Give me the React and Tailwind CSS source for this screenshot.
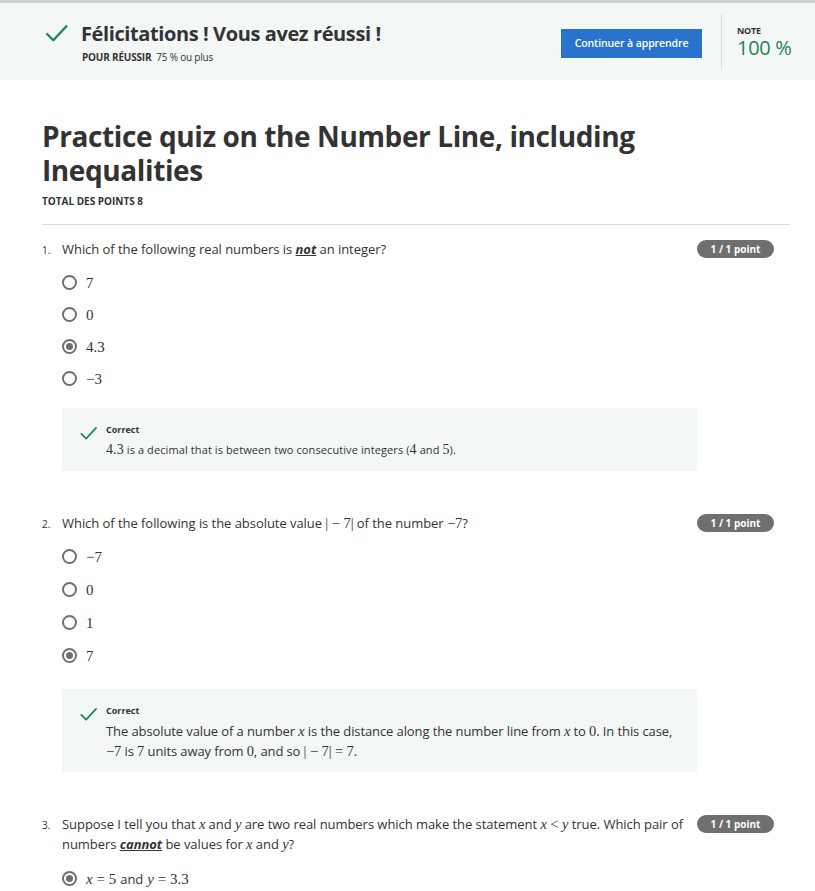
import React from "react";

const M = ({ children, i, s = "text-[15px]" }) => (
  <span className={`font-['Liberation_Serif',serif] ${s} ${i ? "italic" : ""}`}>{children}</span>
);

function Check({ size = 22 }) {
  return (
    <svg width={size} height={size} viewBox="0 0 24 24" fill="none">
      <path d="M3 12.5l6 6L21.5 5" stroke="#1f8354" strokeWidth="2.2" strokeLinecap="round" strokeLinejoin="round" />
    </svg>
  );
}

function Radio({ checked }) {
  return (
    <span className="w-[15px] h-[15px] rounded-full border-2 border-[#6f6f6f] flex items-center justify-center shrink-0">
      {checked && <span className="w-[7px] h-[7px] rounded-full bg-[#6f6f6f]" />}
    </span>
  );
}

function Badge() {
  return (
    <span className="shrink-0 h-[18px] w-[77px] rounded-full bg-[#6f6f6f] text-white text-[10px] font-bold flex items-center justify-center">
      1 / 1 point
    </span>
  );
}

function Option({ checked, h = "h-[32px]", children }) {
  return (
    <div className={`flex items-center gap-[9px] ${h}`}>
      <Radio checked={checked} />
      <span className="text-[#333]">{children}</span>
    </div>
  );
}

function Feedback({ small, children }) {
  return (
    <div className="ml-[20px] w-[635px] bg-[#f3f8f6] pl-[17px] pr-[16px] pt-[15px] pb-[11px] flex gap-[8px]">
      <div className="pt-[1px]">
        <Check size={19} />
      </div>
      <div>
        <div className="text-[9px] font-bold text-[#333] leading-[14px]">Correct</div>
        <div
          className={`mt-[3px] text-[#333] leading-[20px] ${
            small ? "text-[11px] tracking-[0.1px]" : "text-[13px] tracking-[-0.1px]"
          }`}
        >
          {children}
        </div>
      </div>
    </div>
  );
}

function Question({ n, children }) {
  return (
    <div className="flex items-start gap-[4px]">
      <div className="flex flex-1 text-[13px] text-[#333] tracking-[-0.05px] leading-[20px]">
        <span className="w-[20px] shrink-0 text-[10px] pt-[1px]">{n}.</span>
        <span>{children}</span>
      </div>
      <div className="mr-[16px] pt-[1px]">
        <Badge />
      </div>
    </div>
  );
}

export default function App() {
  return (
    <div className="min-h-screen bg-white font-['Open_Sans',sans-serif] text-[#333]">
      <div className="border-t-[3px] border-[#cfcfcf] bg-[#f3f8f6] h-[80px] flex items-center">
        <div className="pl-[44px] flex-1">
          <div className="flex items-center gap-[12px]">
            <Check size={25} />
            <h1 className="text-[20px] font-bold tracking-[-0.4px] text-[#333] leading-[28px]">
              Félicitations ! Vous avez réussi !
            </h1>
          </div>
          <div className="pl-[38px] text-[10px] mt-[2px] leading-[14px] tracking-[-0.2px]">
            <span className="font-bold">POUR RÉUSSIR</span>
            <span className="ml-[5px]">75 % ou plus</span>
          </div>
        </div>
        <button className="w-[141px] h-[29px] bg-[#2a73cc] text-white text-[10.5px] font-semibold tracking-[-0.1px] mt-[4px]">
          Continuer à apprendre
        </button>
        <div className="ml-[19px] w-px h-[55px] bg-[#d9dedc]" />
        <div className="pl-[15px] w-[93px]">
          <div className="text-[9px] font-bold tracking-[-0.2px]">NOTE</div>
          <div className="text-[20px] text-[#1f8354] leading-[22px] tracking-[-0.3px]">100 %</div>
        </div>
      </div>

      <div className="pl-[42px] pr-[25px]">
        <h2 className="mt-[39px] text-[28px] font-bold leading-[34px] tracking-[-0.4px] w-[640px]">
          Practice quiz on the Number Line, including Inequalities
        </h2>
        <div className="mt-[7px] text-[10px] leading-[14px] font-bold">TOTAL DES POINTS 8</div>
        <div className="mt-[16px] h-px bg-[#dcdcdc]" />

        <div className="mt-[14px]">
          <Question n={1}>
            Which of the following real numbers is{" "}
            <b className="italic underline">not</b> an integer?
          </Question>
          <div className="mt-[6px] pl-[20px]">
            <Option><M>7</M></Option>
            <Option><M>0</M></Option>
            <Option checked><M>4.3</M></Option>
            <Option><M>−3</M></Option>
          </div>
          <div className="mt-[14px]">
            <Feedback small>
              <M s="text-[14px]">4.3</M> is a decimal that is between two consecutive integers (
              <M s="text-[14px]">4</M> and <M s="text-[14px]">5</M>).
            </Feedback>
          </div>
        </div>

        <div className="mt-[42px]">
          <Question n={2}>
            Which of the following is the absolute value <M s="text-[14.5px]">| − 7|</M> of the number{" "}
            <M s="text-[14.5px]">−7</M>?
          </Question>
          <div className="mt-[6px] pl-[20px]">
            <Option h="h-[33px]"><M>−7</M></Option>
            <Option h="h-[33px]"><M>0</M></Option>
            <Option h="h-[33px]"><M>1</M></Option>
            <Option h="h-[33px]" checked><M>7</M></Option>
          </div>
          <div className="mt-[17px]">
            <Feedback>
              The absolute value of a number <M i s="text-[14.5px]">x</M> is the distance along the number line from{" "}
              <M i s="text-[14.5px]">x</M> to <M s="text-[14.5px]">0</M>. In this case, <M s="text-[14.5px]">−7</M> is{" "}
              <M s="text-[14.5px]">7</M> units away from <M s="text-[14.5px]">0</M>, and so{" "}
              <M s="text-[14.5px]">| − 7| = 7</M>.
            </Feedback>
          </div>
        </div>

        <div className="mt-[42px]">
          <Question n={3}>
            Suppose I tell you that <M i s="text-[14.5px]">x</M> and <M i s="text-[14.5px]">y</M> are two real numbers
            which make the statement{" "}
            <M s="text-[14.5px]">
              <i>x</i> &lt; <i>y</i>
            </M>{" "}
            true. Which pair of numbers <b className="italic underline">cannot</b> be values for{" "}
            <M i s="text-[14.5px]">x</M> and <M i s="text-[14.5px]">y</M>?
          </Question>
          <div className="mt-[8px] pl-[20px]">
            <Option checked>
              <M>
                <i>x</i> = 5
              </M>{" "}
              <span className="text-[13px] tracking-[-0.1px]">and</span>{" "}
              <M>
                <i>y</i> = 3.3
              </M>
            </Option>
          </div>
        </div>
      </div>
    </div>
  );
}
